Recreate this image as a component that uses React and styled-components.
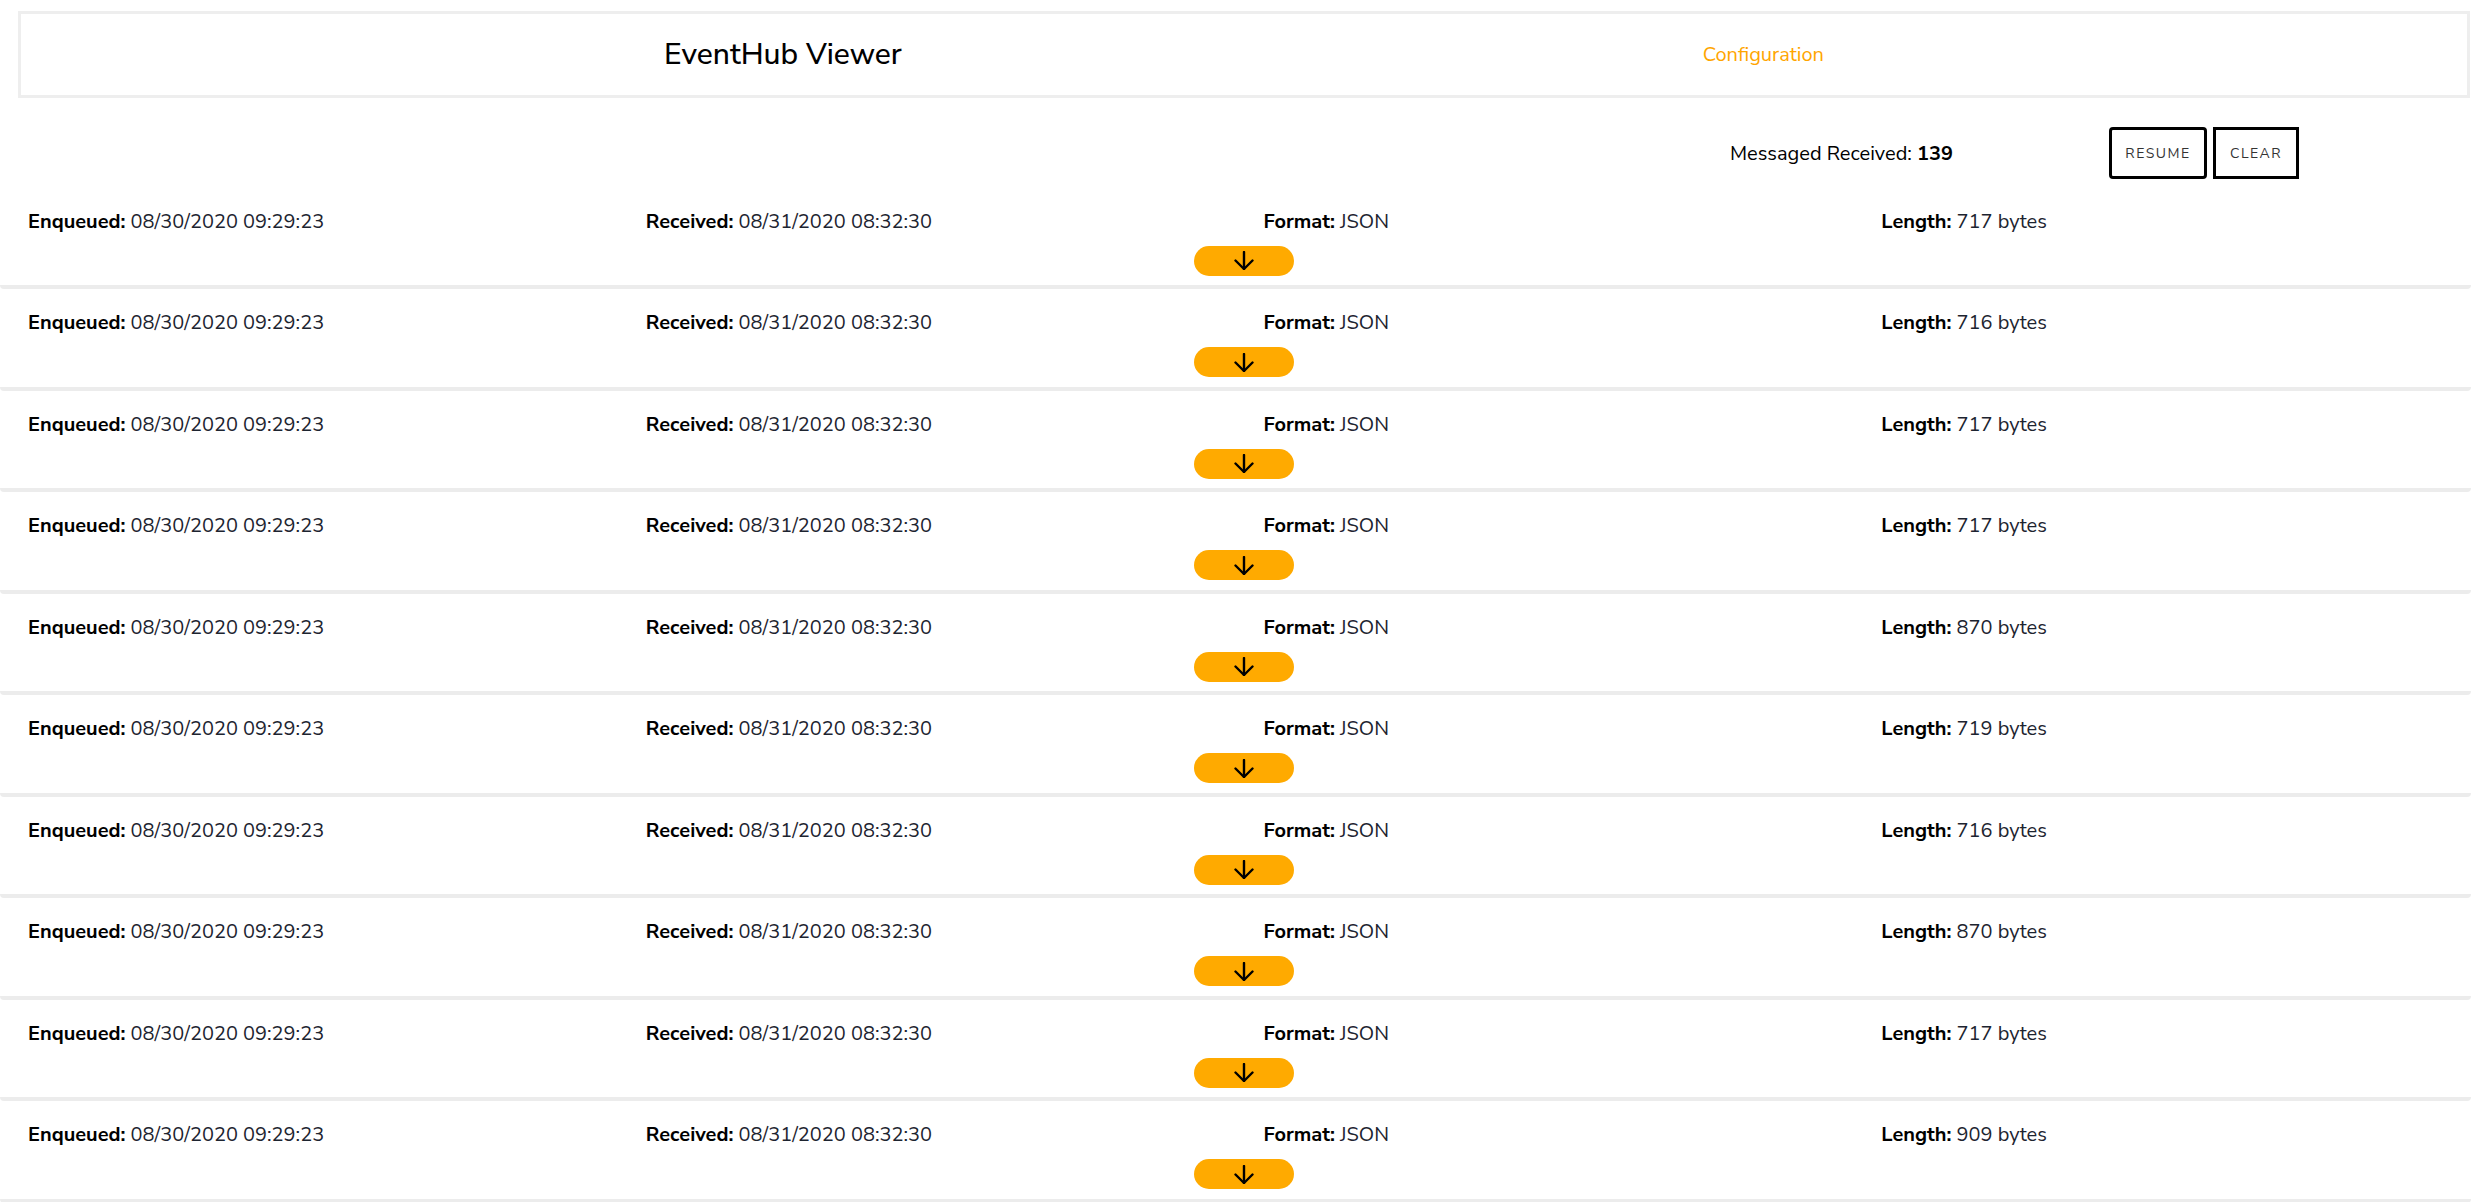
import React from 'react'
import styled, { createGlobalStyle } from 'styled-components'

const GlobalStyle = createGlobalStyle`
body {
  margin: 0;
  font-family: "Nunito Sans", Lato, "Open Sans", sans-serif;
  color: #000;
  background: #fff;
  overflow: hidden;
}
`

const Header = styled.header`
display: flex;
align-items: center;
justify-content: center;
gap: 801px;
box-sizing: border-box;
height: 87px;
margin: 11px 1px 0 18px;
border: 3px solid #eeeeee;
`
const Title = styled.h1`
margin: 0;
font-size: 30px;
font-weight: 500;
color: #000;
`
const NavLink = styled.a`
font-size: 20px;
color: #ffa500;
text-decoration: none;
cursor: pointer;
`
const StatusBar = styled.div`
display: flex;
align-items: center;
justify-content: flex-end;
padding: 29px 172px 8.5px 0;
`
const Counter = styled.div`
font-size: 20px;
margin-right: 156px;
b {
    font-weight: 700;
}
`
const Buttons = styled.div`
display: flex;
gap: 6px;
`
const OutlineButton = styled.button`
box-sizing: border-box;
height: 52px;
width: ${props => props.w}px;
border: 3px solid #000;
border-radius: ${props => props.rounded ? '4px' : '0'};
background: #fff;
font-family: inherit;
font-size: 14px;
letter-spacing: 1.5px;
text-transform: uppercase;
color: #333;
cursor: pointer;
`
const Row = styled.div`
padding: 20px 0 9.5px;
border-bottom: 4px solid #ececec;
border-radius: 4px;
`
const Fields = styled.div`
display: grid;
grid-template-columns: repeat(4, 1fr);
height: 27px;
align-items: center;
margin-bottom: 11px;
`
const Field = styled.div`
padding-left: 28px;
font-size: 20px;
color: #1d2430;
b {
    font-weight: 700;
    color: #000;
}
`
const ToggleRow = styled.div`
display: flex;
justify-content: center;
padding-left: 17px;
`
const Toggle = styled.button`
width: 100px;
height: 30px;
border: none;
border-radius: 15px;
background: #ffaa00;
display: flex;
align-items: center;
justify-content: center;
padding: 0;
cursor: pointer;
`

const ArrowDown = () => (
    <svg width="20" height="19" viewBox="0 0 20 19" fill="none" stroke="#000" strokeWidth="2.4" strokeLinecap="round" strokeLinejoin="round">
        <path d="M10 1v17" />
        <path d="M1.5 9.5 10 18l8.5-8.5" />
    </svg>
)

const lengths = [717, 716, 717, 717, 870, 719, 716, 870, 717, 909]

function MessageRow({ length }) {
    return (
        <Row>
            <Fields>
                <Field><b>Enqueued:</b> 08/30/2020 09:29:23</Field>
                <Field><b>Received:</b> 08/31/2020 08:32:30</Field>
                <Field><b>Format:</b> JSON</Field>
                <Field><b>Length:</b> {length} bytes</Field>
            </Fields>
            <ToggleRow>
                <Toggle aria-label="expand">
                    <ArrowDown />
                </Toggle>
            </ToggleRow>
        </Row>
    )
}

export default function App() {
    return (
        <>
            <GlobalStyle />
            <Header>
                <Title>EventHub Viewer</Title>
                <NavLink>Configuration</NavLink>
            </Header>
            <StatusBar>
                <Counter>Messaged Received: <b>139</b></Counter>
                <Buttons>
                    <OutlineButton w={98} rounded>Resume</OutlineButton>
                    <OutlineButton w={86}>Clear</OutlineButton>
                </Buttons>
            </StatusBar>
            {lengths.map((l, i) => (
                <MessageRow key={i} length={l} />
            ))}
        </>
    )
}
